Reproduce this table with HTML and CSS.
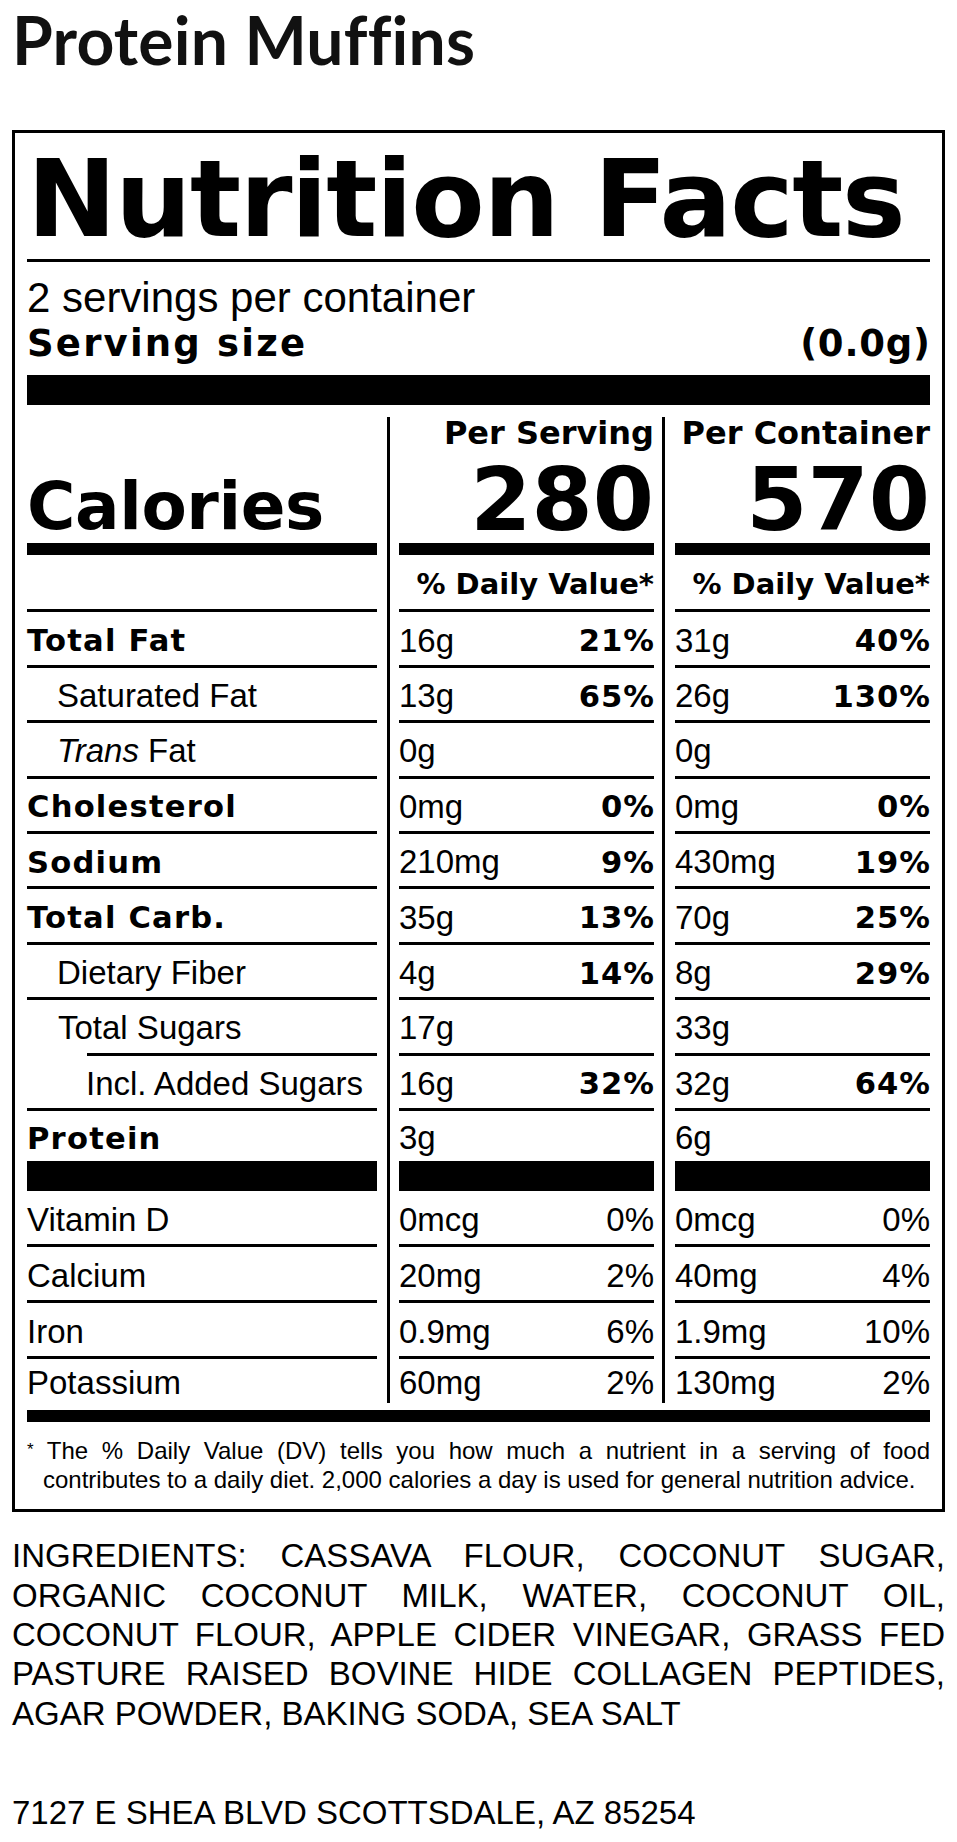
FILE: index.html
```html
<!DOCTYPE html>
<html lang="en">
<head>
<meta charset="utf-8">
<title>Protein Muffins</title>
<link rel="stylesheet" href="styles.css">
</head>
<body>
<h1 class="title">Protein Muffins</h1>
<section class="label">
  <h2 class="nf-title">Nutrition Facts</h2>
  <p class="servings">2 servings per container</p>
  <div class="serving-size"><span class="ss-label">Serving size</span><span class="ss-val">(0.0g)</span></div>
  <div class="bar-thick"></div>
  <div class="facts">
    <div class="vline v1"></div>
    <div class="vline v2"></div>

    <div class="cal-label">Calories</div>
    <div class="cal-col"><div class="per">Per Serving</div><div class="cal-num">280</div></div>
    <div class="cal-col"><div class="per">Per Container</div><div class="cal-num">570</div></div>

    <div class="bar-med"></div><div class="bar-med"></div><div class="bar-med"></div>

    <div class="cell dv"></div>
    <div class="cell dv"><b class="bd dvtxt">% Daily Value*</b></div>
    <div class="cell dv"><b class="bd dvtxt">% Daily Value*</b></div>

    <div class="cell"><b class="bd lbl">Total Fat</b></div>
    <div class="cell"><span>16g</span><b class="bd pct">21%</b></div>
    <div class="cell"><span>31g</span><b class="bd pct">40%</b></div>

    <div class="cell ind1"><span>Saturated Fat</span></div>
    <div class="cell"><span>13g</span><b class="bd pct">65%</b></div>
    <div class="cell"><span>26g</span><b class="bd pct">130%</b></div>

    <div class="cell ind1"><span><i>Trans</i> Fat</span></div>
    <div class="cell"><span>0g</span></div>
    <div class="cell"><span>0g</span></div>

    <div class="cell"><b class="bd lbl">Cholesterol</b></div>
    <div class="cell"><span>0mg</span><b class="bd pct">0%</b></div>
    <div class="cell"><span>0mg</span><b class="bd pct">0%</b></div>

    <div class="cell"><b class="bd lbl">Sodium</b></div>
    <div class="cell"><span>210mg</span><b class="bd pct">9%</b></div>
    <div class="cell"><span>430mg</span><b class="bd pct">19%</b></div>

    <div class="cell"><b class="bd lbl">Total Carb.</b></div>
    <div class="cell"><span>35g</span><b class="bd pct">13%</b></div>
    <div class="cell"><span>70g</span><b class="bd pct">25%</b></div>

    <div class="cell ind1"><span>Dietary Fiber</span></div>
    <div class="cell"><span>4g</span><b class="bd pct">14%</b></div>
    <div class="cell"><span>8g</span><b class="bd pct">29%</b></div>

    <div class="cell sugars"><span class="sugars-lbl">Total Sugars</span></div>
    <div class="cell"><span>17g</span></div>
    <div class="cell"><span>33g</span></div>

    <div class="cell ind2"><span>Incl. Added Sugars</span></div>
    <div class="cell"><span>16g</span><b class="bd pct">32%</b></div>
    <div class="cell"><span>32g</span><b class="bd pct">64%</b></div>

    <div class="cell last"><b class="bd lbl">Protein</b></div>
    <div class="cell last"><span>3g</span></div>
    <div class="cell last"><span>6g</span></div>

    <div class="bar-big"></div><div class="bar-big"></div><div class="bar-big"></div>

    <div class="cell vit"><span>Vitamin D</span></div>
    <div class="cell vit"><span>0mcg</span><span>0%</span></div>
    <div class="cell vit"><span>0mcg</span><span>0%</span></div>

    <div class="cell vit"><span>Calcium</span></div>
    <div class="cell vit"><span>20mg</span><span>2%</span></div>
    <div class="cell vit"><span>40mg</span><span>4%</span></div>

    <div class="cell vit"><span>Iron</span></div>
    <div class="cell vit"><span>0.9mg</span><span>6%</span></div>
    <div class="cell vit"><span>1.9mg</span><span>10%</span></div>

    <div class="cell vit-last"><span>Potassium</span></div>
    <div class="cell vit-last"><span>60mg</span><span>2%</span></div>
    <div class="cell vit-last"><span>130mg</span><span>2%</span></div>
  </div>
  <div class="bar-end"></div>
  <p class="footnote"><span class="ast">*</span> The % Daily Value (DV) tells you how much a nutrient in a serving of food contributes to a daily diet. 2,000 calories a day is used for general nutrition advice.</p>
</section>
<p class="ingredients">INGREDIENTS: CASSAVA FLOUR, COCONUT SUGAR, ORGANIC COCONUT MILK, WATER, COCONUT OIL, COCONUT FLOUR, APPLE CIDER VINEGAR, GRASS FED PASTURE RAISED BOVINE HIDE COLLAGEN PEPTIDES, AGAR POWDER, BAKING SODA, SEA SALT</p>
<p class="address">7127 E SHEA BLVD SCOTTSDALE, AZ 85254</p>
</body>
</html>
```

FILE: styles.css
```css
* { box-sizing: border-box; }

body {
  margin: 0;
  padding: 0 12px;
  background: #fff;
  color: #000;
  font-family: "Liberation Sans", Arial, sans-serif;
}

.title {
  font-family: Lato, "Open Sans", sans-serif;
  font-weight: 700;
  font-size: 66px;
  letter-spacing: 0.2px;
  line-height: 1.2;
  color: #111;
  margin: 0 0 50.8px;
}

.label {
  border: 3px solid #000;
  padding: 0 12px 15px;
}

.nf-title {
  font-family: "DejaVu Sans", sans-serif;
  font-weight: 700;
  font-size: 107px;
  letter-spacing: -1.4px;
  line-height: 1;
  white-space: nowrap;
  margin: 0;
  padding: 13px 0 6px;
  border-bottom: 3px solid #000;
}

.servings {
  font-size: 42px;
  line-height: 46px;
  margin: 13px 0 0;
}

.serving-size {
  display: flex;
  justify-content: space-between;
  align-items: baseline;
  font-family: "DejaVu Sans", sans-serif;
  font-weight: 700;
  font-size: 37px;
  line-height: 40px;
  margin-top: 3px;
}

.ss-label { letter-spacing: 2.2px; }
.ss-val { letter-spacing: 0.8px; margin-right: -0.8px; }

.bar-thick {
  height: 30px;
  background: #000;
  margin-top: 11.5px;
}

.facts {
  display: grid;
  grid-template-columns: 350px 22px 255px 21px 255px;
  margin-top: 12px;
}

.vline {
  grid-row: 1 / span 18;
  width: 3px;
  background: #000;
  justify-self: start;
}
.v1 { grid-column: 2; margin-left: 10px; }
.v2 { grid-column: 4; margin-left: 8px; }

.cal-label {
  height: 126px;
  display: flex;
  align-items: flex-end;
  padding-bottom: 3.8px;
  font-family: "DejaVu Sans", sans-serif;
  font-weight: 700;
  font-size: 66px;
  letter-spacing: -0.4px;
  line-height: 1;
}

.cal-col {
  display: flex;
  flex-direction: column;
  align-items: flex-end;
  font-family: "DejaVu Sans", sans-serif;
  font-weight: 700;
}

.per {
  font-size: 32px;
  line-height: 32px;
  white-space: nowrap;
}

.cal-num {
  font-size: 88px;
  line-height: 80px;
  margin-top: 11px;
}

.bar-med { height: 12px; background: #000; }
.bar-big { height: 30px; background: #000; }

.cell {
  height: 55.4px;
  padding-top: 4px;
  border-bottom: 3px solid #000;
  display: flex;
  align-items: center;
  justify-content: space-between;
  font-size: 33px;
  line-height: normal;
  white-space: nowrap;
}

.cell.dv { height: 57px; }
.cell.last { height: 50px; border-bottom: 0; }
.cell.vit { height: 56px; }
.cell.vit-last { height: 44.3px; border-bottom: 0; }

.ind1 { padding-left: 30px; }
.ind2 { padding-left: 59px; }

.sugars { margin-left: 60px; }
.sugars-lbl { margin-left: -29px; }

.bd {
  font-family: "DejaVu Sans", sans-serif;
  font-weight: 700;
  font-size: 30.6px;
}

.bd.lbl { letter-spacing: 1.2px; }
.bd.pct { letter-spacing: 1px; margin-right: -1px; }

.dv .dvtxt {
  font-size: 29px;
  margin-left: auto;
}

.bar-end {
  height: 12px;
  background: #000;
  margin-top: 7px;
}

.footnote {
  font-size: 24px;
  line-height: 29px;
  margin: 12.6px 0 0;
  padding-left: 16px;
  text-indent: -16px;
  text-align: justify;
}

.ast { font-size: 17px; vertical-align: 4px; }

.ingredients {
  font-size: 33px;
  line-height: 39.3px;
  text-align: justify;
  margin: 24.6px 0 0;
}

.address {
  font-size: 33px;
  line-height: 39.3px;
  margin: 60.5px 0 0;
}
```
